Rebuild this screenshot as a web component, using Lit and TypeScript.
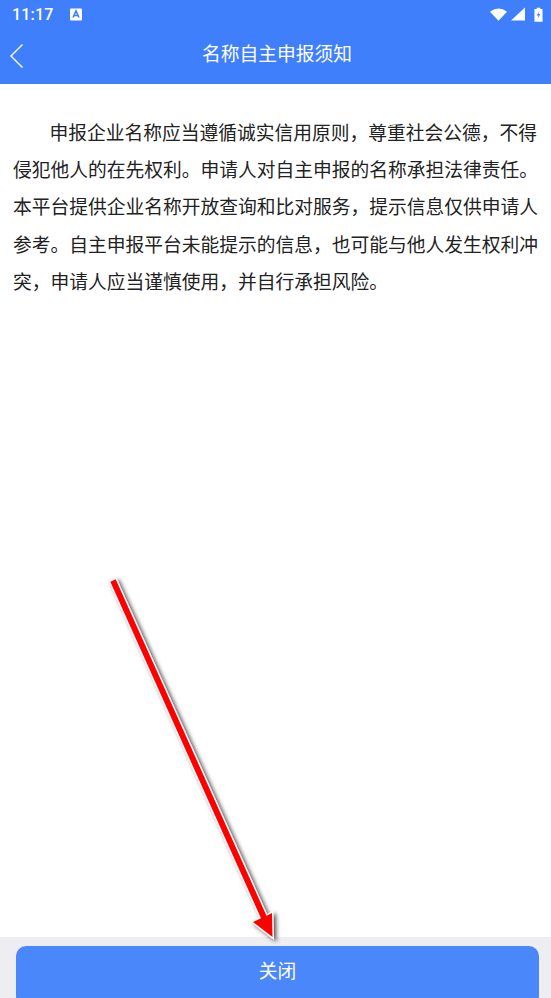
import { LitElement, html, css } from "lit";
import { customElement } from "lit/decorators.js";

@customElement("app-root")
export class AppRoot extends LitElement {
  static styles = css`
    :host {
      display: flex;
      flex-direction: column;
      position: relative;
      width: 551px;
      height: 998px;
      overflow: hidden;
      background: #fff;
      font-family: "Noto Sans CJK SC", "Noto Sans", sans-serif;
    }
    .top {
      background: #3f7ffb;
      color: #fff;
      height: 84px;
      display: flex;
      flex-direction: column;
    }
    .status {
      height: 28px;
      display: flex;
      align-items: center;
      padding: 0 8px 0 12px;
      font-family: Roboto, sans-serif;
      font-size: 16px;
      font-weight: 500;
      letter-spacing: 0.2px;
    }
    .time { margin-right: 16px; }
    .a-icon { display: block; }
    .status-right { margin-left: auto; display: flex; align-items: center; gap: 4px; }
    .status-right svg { display: block; }
    .status-right .batt { margin-left: 5px; }
    .nav {
      flex: 1;
      display: flex;
      align-items: center;
      position: relative;
      justify-content: center;
      padding-left: 3px;
      padding-bottom: 8px;
      font-size: 18.75px;
    }
    .back { position: absolute; left: 9px; top: 15px; display: block; }
    .content {
      flex: 1;
      margin: 0;
      padding: 29px 13px 0;
      font-size: 18.75px;
      line-height: 37.2px;
      color: #222;
      text-indent: 36.5px;
    }
    .footer {
      background: #eeeef2;
      height: 61px;
      padding: 9px 12px 0 16px;
      box-sizing: border-box;
    }
    .close {
      display: block;
      width: 100%;
      height: 60px;
      border: none;
      border-radius: 10px;
      padding: 0 0 12px;
      background: #4a87fb;
      color: #fff;
      font: inherit;
      font-size: 18.75px;
      line-height: 48px;
    }
    .arrow { position: absolute; left: 0; top: 0; pointer-events: none; }
  `;

  render() {
    return html`
      <div class="top">
        <div class="status">
          <span class="time">11:17</span>
          <svg class="a-icon" width="12" height="13" viewBox="0 0 12 13">
            <rect width="12" height="12" y="0.5" rx="1" fill="#fff" />
            <path d="M3 9.5 L6 3 L9 9.5 M4.2 7.5 H7.8" fill="none" stroke="#3f7ffb" stroke-width="1.6" />
          </svg>
          <div class="status-right">
            <svg width="17" height="13" viewBox="0 0 18 13">
              <path d="M0 3.5 Q9 -3 18 3.5 L9 13 Z" fill="#fff" />
            </svg>
            <svg width="14" height="14" viewBox="0 0 15 14">
              <path d="M0 14 L15 0 V14 Z" fill="#fff" />
            </svg>
            <svg class="batt" width="9" height="15" viewBox="0 0 10 16">
              <path d="M3 0.5 H7 V2 H9.5 V16 H0.5 V2 H3 Z" fill="#fff" />
              <path d="M6 4 L3 9 H5 L4 13 L7 7.5 H5 Z" fill="#3f7ffb" />
            </svg>
          </div>
        </div>
        <div class="nav">
          <svg class="back" width="16" height="26" viewBox="0 0 16 26">
            <path d="M13.5 1.5 L2 13 L13.5 24.5" fill="none" stroke="#fff" stroke-width="1.4" />
          </svg>
          <span>名称自主申报须知</span>
        </div>
      </div>
      <p class="content">申报企业名称应当遵循诚实信用原则，尊重社会公德，不得侵犯他人的在先权利。申请人对自主申报的名称承担法律责任。本平台提供企业名称开放查询和比对服务，提示信息仅供申请人参考。自主申报平台未能提示的信息，也可能与他人发生权利冲突，申请人应当谨慎使用，并自行承担风险。</p>
      <div class="footer"><button class="close">关闭</button></div>
      <svg class="arrow" width="551" height="998" viewBox="0 0 551 998">
        <defs>
          <filter id="s" x="-20%" y="-20%" width="140%" height="140%">
            <feDropShadow dx="2.5" dy="2" stdDeviation="2" flood-color="#000" flood-opacity="0.7" />
          </filter>
        </defs>
        <path
          d="M115.7 579.3 L266.5 915.8 L272 913 L272.5 937 L253 922 L261 918.2 L110.3 581.7 Z"
          fill="#f00"
          stroke="#fff"
          stroke-width="2.6"
          paint-order="stroke"
          filter="url(#s)"
        />
      </svg>
    `;
  }
}
